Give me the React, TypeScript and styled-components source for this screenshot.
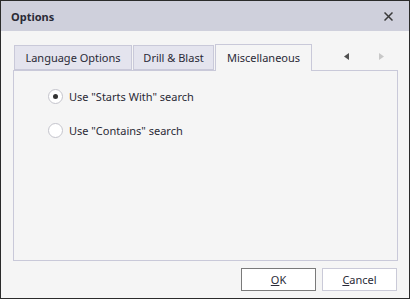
import styled, { createGlobalStyle } from 'styled-components';

const GlobalStyle = createGlobalStyle`
  html, body {
    margin: 0;
    padding: 0;
    background: #ffffff;
  }
  body {
    font-family: "Noto Sans", "Open Sans", sans-serif;
    font-size: 11px;
    color: #1e1e1e;
  }
`;

const Window = styled.div`
  width: 410px;
  height: 299px;
  box-sizing: border-box;
  border: 1px solid #2b2b2b;
  background: #f5f5f5;
  display: flex;
  flex-direction: column;
`;

const TitleBar = styled.div`
  height: 30px;
  flex: none;
  background: #cfd0dc;
  display: flex;
  align-items: center;
  justify-content: space-between;
  padding: 0 14px 0 10px;
`;

const Title = styled.span`
  font-weight: 700;
  font-size: 11px;
  color: #2a2a36;
`;

const CloseButton = styled.button`
  width: 14px;
  height: 14px;
  padding: 0;
  border: none;
  background: transparent;
  display: flex;
  align-items: center;
  justify-content: center;
`;

const Body = styled.div`
  flex: 1;
  display: flex;
  flex-direction: column;
  padding: 13px 11px 7px 12px;
`;

const TabStrip = styled.div`
  height: 26px;
  display: flex;
  align-items: flex-end;
  position: relative;
  z-index: 1;
`;

interface TabProps {
  $active?: boolean;
  $width: number;
}

const Tab = styled.div<TabProps>`
  box-sizing: border-box;
  width: ${p => p.$width}px;
  height: ${p => (p.$active ? 27 : 25)}px;
  margin-bottom: ${p => (p.$active ? -1 : 0)}px;
  margin-right: 1px;
  border: 1px solid #c9c9d9;
  border-bottom: ${p => (p.$active ? 'none' : '1px solid #c9c9d9')};
  background: ${p => (p.$active ? '#f5f5f5' : '#e4e4ee')};
  display: flex;
  align-items: center;
  justify-content: center;
  padding-bottom: ${p => (p.$active ? 1 : 0)}px;
  color: #2a2a36;
  &:first-child {
    margin-left: 1px;
  }
`;

const Scrollers = styled.div`
  margin-left: auto;
  height: 26px;
  display: flex;
  align-items: center;
  gap: 30px;
  padding-right: 14px;
  padding-bottom: 2px;
  box-sizing: border-box;
`;

const Panel = styled.div`
  height: 191px;
  box-sizing: border-box;
  border: 1px solid #c9c9d9;
  background: #f5f5f5;
  display: flex;
  flex-direction: column;
  padding: 18px 0 0 34px;
  gap: 19px;
`;

const RadioRow = styled.label`
  display: flex;
  align-items: center;
  gap: 6px;
  height: 15px;
  color: #2a2a36;
`;

interface RadioProps {
  $checked?: boolean;
}

const Radio = styled.span<RadioProps>`
  box-sizing: border-box;
  width: 15px;
  height: 15px;
  border-radius: 50%;
  border: 1px solid #c4c4cc;
  background: #ffffff;
  display: flex;
  align-items: center;
  justify-content: center;
  &::after {
    content: '';
    display: ${p => (p.$checked ? 'block' : 'none')};
    width: 5px;
    height: 5px;
    border-radius: 50%;
    background: #333333;
  }
`;

const Footer = styled.div`
  margin-top: auto;
  display: flex;
  justify-content: flex-end;
  gap: 6px;
  padding-right: 1px;
`;

interface ButtonProps {
  $default?: boolean;
}

const Button = styled.button<ButtonProps>`
  box-sizing: border-box;
  width: 75px;
  height: 23px;
  background: #ffffff;
  border: 1px solid ${p => (p.$default ? '#7a7a7a' : '#cacad8')};
  font-family: "Noto Sans", "Open Sans", sans-serif;
  font-size: 11px;
  color: #2a2a36;
  padding: 0;
`;

export default function App() {
  return (
    <>
      <GlobalStyle />
      <Window>
        <TitleBar>
          <Title>Options</Title>
          <CloseButton aria-label="Close">
            <svg width="9" height="9" viewBox="0 0 9 9">
              <path d="M0.5 0.5 L8.5 8.5 M8.5 0.5 L0.5 8.5" stroke="#3a3a3a" strokeWidth="1.5" />
            </svg>
          </CloseButton>
        </TitleBar>
        <Body>
          <TabStrip>
            <Tab $width={118}>Language Options</Tab>
            <Tab $width={81}>Drill &amp; Blast</Tab>
            <Tab $width={97} $active>Miscellaneous</Tab>
            <Scrollers>
              <svg width="5" height="7" viewBox="0 0 5 7">
                <path d="M5 0 L0 3.5 L5 7 Z" fill="#505050" />
              </svg>
              <svg width="5" height="7" viewBox="0 0 5 7">
                <path d="M0 0 L5 3.5 L0 7 Z" fill="#c8c8c8" />
              </svg>
            </Scrollers>
          </TabStrip>
          <Panel>
            <RadioRow>
              <Radio $checked />
              Use "Starts With" search
            </RadioRow>
            <RadioRow>
              <Radio />
              Use "Contains" search
            </RadioRow>
          </Panel>
          <Footer>
            <Button $default><u>O</u>K</Button>
            <Button><u>C</u>ancel</Button>
          </Footer>
        </Body>
      </Window>
    </>
  );
}
